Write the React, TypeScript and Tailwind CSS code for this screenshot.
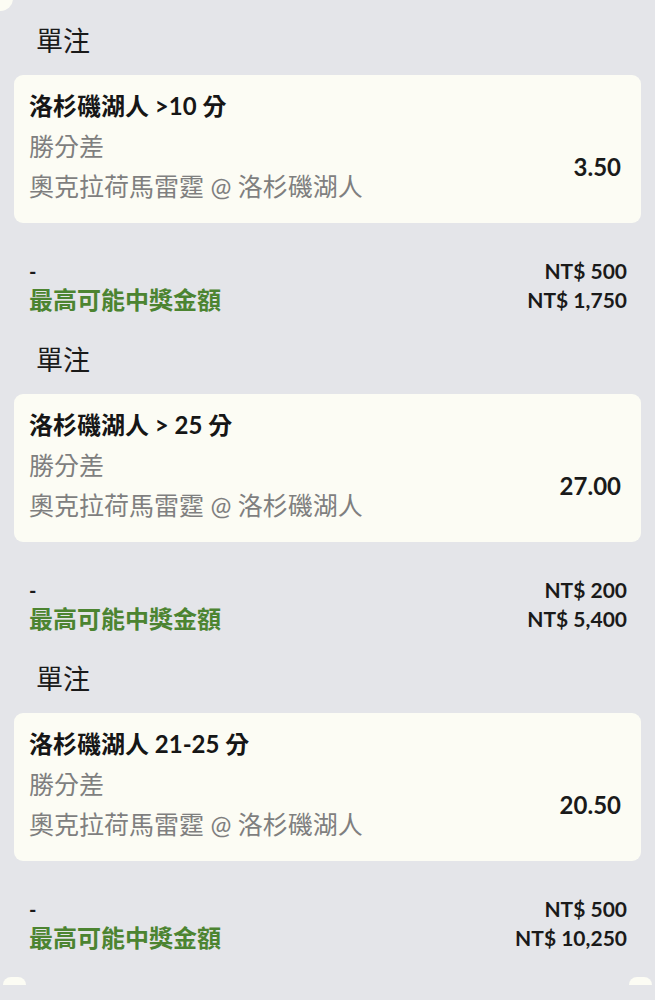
import React from "react";

// Bet slip entries
const bets = [
  { pick: "洛杉磯湖人 >10 分", odds: "3.50", stake: "NT$ 500", payout: "NT$ 1,750" },
  { pick: "洛杉磯湖人 > 25 分", odds: "27.00", stake: "NT$ 200", payout: "NT$ 5,400" },
  { pick: "洛杉磯湖人 21-25 分", odds: "20.50", stake: "NT$ 500", payout: "NT$ 10,250" },
];

const BetSection = ({ bet }: { bet: (typeof bets)[number] }) => (
  <div className="pb-[26px]">
    <div className="pl-[22px] text-[27px] leading-[40px] text-[#1a1a1a]">單注</div>
    <div className="mt-[14px] h-[148px] rounded-[9px] bg-[#fcfcf4] px-[15px] flex justify-between">
      <div className="pt-[11px]">
        <div className="text-[24px] leading-[40px] font-bold text-[#161616]">{bet.pick}</div>
        <div className="text-[25px] leading-[40px] text-[#7f7f7f]">勝分差</div>
        <div className="text-[25px] leading-[40px] text-[#7f7f7f]">奧克拉荷馬雷霆 @ 洛杉磯湖人</div>
      </div>
      <div className="pt-[76px] pr-[5px] text-[24px] leading-8 font-bold text-[#1a1a1a]">{bet.odds}</div>
    </div>
    <div className="mt-[33px] pl-[15px] pr-[14px]">
      <div className="flex justify-between h-[29px] items-center">
        <span className="text-[20px] font-bold text-[#1a1a1a]">-</span>
        <span className="text-[21px] font-bold text-[#1a1a1a]">{bet.stake}</span>
      </div>
      <div className="flex justify-between h-[29px] items-center">
        <span className="text-[24px] font-bold text-[#4c8431]">最高可能中獎金額</span>
        <span className="text-[21px] font-bold text-[#1a1a1a]">{bet.payout}</span>
      </div>
    </div>
  </div>
);

export default function App() {
  return (
    <div
      className="relative w-[655px] h-[1000px] overflow-hidden bg-[#e4e5e9] px-[14px] pt-[21px]"
      style={{ fontFamily: "Lato, 'Noto Sans CJK TC', sans-serif" }}
    >
      {/* ticket notch decorations */}
      <div className="absolute -left-[12px] -top-[14px] w-[25px] h-[25px] rounded-full bg-[#fcfcf4]" />
      <div className="absolute left-[3px] top-[977px] w-[23px] h-[16px] rounded-full bg-[#fcfcf4]" />
      <div className="absolute left-[629px] top-[977px] w-[23px] h-[16px] rounded-full bg-[#fcfcf4]" />
      <div className="absolute left-0 top-[985px] w-[655px] h-[15px] bg-[#e4e5e9]" />
      {bets.map((bet, i) => (
        <BetSection key={i} bet={bet} />
      ))}
    </div>
  );
}
